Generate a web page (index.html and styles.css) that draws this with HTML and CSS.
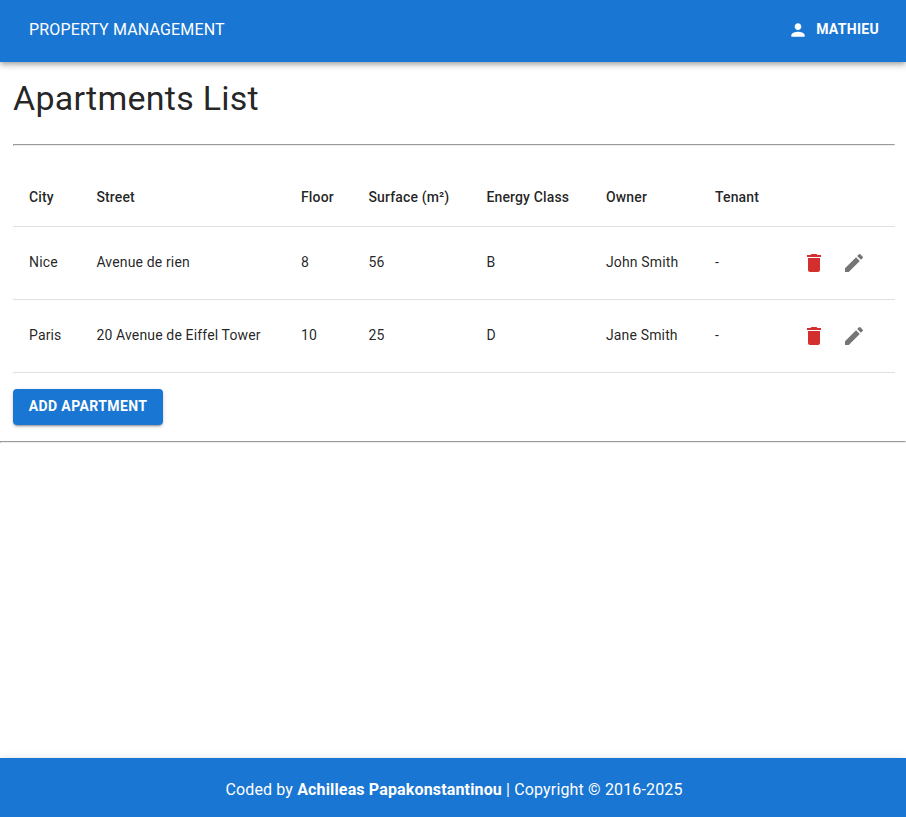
FILE: index.html
```html
<!DOCTYPE html>
<html lang="en">
<head>
<meta charset="utf-8">
<title>Property Management</title>
<link rel="stylesheet" href="styles.css">
</head>
<body>
<header class="appbar">
  <div class="brand">PROPERTY MANAGEMENT</div>
  <button class="user"><svg viewBox="0 0 24 24"><path d="M12 12c2.21 0 4-1.79 4-4s-1.79-4-4-4-4 1.79-4 4 1.79 4 4 4m0 2c-2.67 0-8 1.34-8 4v2h16v-2c0-2.66-5.33-4-8-4"/></svg><span>MATHIEU</span></button>
</header>
<main class="content">
  <h1>Apartments List</h1>
  <hr class="rule">
  <table>
    <colgroup><col class="c1"><col class="c2"><col class="c3"><col class="c4"><col class="c5"><col class="c6"><col class="c7"><col></colgroup>
    <thead><tr><th>City</th><th>Street</th><th>Floor</th><th>Surface (m²)</th><th>Energy Class</th><th>Owner</th><th>Tenant</th><th></th></tr></thead>
    <tbody>
      <tr><td>Nice</td><td>Avenue de rien</td><td>8</td><td>56</td><td>B</td><td>John Smith</td><td>-</td><td class="tools"><div class="actions"><svg class="delete" viewBox="0 0 24 24"><path d="M6 19c0 1.100.9 2 2 2h8c1.100 0 2-.9 2-2V7H6zM19 4h-3.500l-1-1h-5l-1 1H5v2h14z"/></svg><svg class="edit" viewBox="0 0 24 24"><path d="M3 17.250V21h3.750L17.810 9.940l-3.750-3.750zM20.710 7.040c.39-.39.39-1.020 0-1.410l-2.340-2.340a.996.996 0 0 0-1.410 0l-1.830 1.830 3.750 3.750z"/></svg></div></td></tr>
      <tr><td>Paris</td><td>20 Avenue de Eiffel Tower</td><td>10</td><td>25</td><td>D</td><td>Jane Smith</td><td>-</td><td class="tools"><div class="actions"><svg class="delete" viewBox="0 0 24 24"><path d="M6 19c0 1.100.9 2 2 2h8c1.100 0 2-.9 2-2V7H6zM19 4h-3.500l-1-1h-5l-1 1H5v2h14z"/></svg><svg class="edit" viewBox="0 0 24 24"><path d="M3 17.250V21h3.750L17.810 9.940l-3.750-3.750zM20.710 7.040c.39-.39.39-1.020 0-1.410l-2.340-2.340a.996.996 0 0 0-1.410 0l-1.830 1.830 3.750 3.750z"/></svg></div></td></tr>
    </tbody>
  </table>
  <button class="add">ADD APARTMENT</button>
</main>
<hr class="divider">
<footer class="footer"><p>Coded by <strong>Achilleas Papakonstantinou</strong> | Copyright © 2016-2025</p></footer>
</body>
</html>
```
FILE: styles.css
```css
* { box-sizing: border-box; }
body {
  margin: 0;
  min-height: 817px;
  display: flex;
  flex-direction: column;
  font-family: Roboto, sans-serif;
  color: rgba(0, 0, 0, 0.87);
  background: #fff;
}
button { border: 0; font-family: inherit; color: #fff; }
.appbar {
  height: 62px;
  padding: 0 19px 4px 29px;
  display: flex;
  align-items: center;
  justify-content: space-between;
  color: #fff;
  background: #1976d2;
  box-shadow: 0 2px 4px -1px rgba(0,0,0,.2), 0 4px 5px rgba(0,0,0,.14), 0 1px 10px rgba(0,0,0,.12);
}
.brand { padding-top: 2px; font-size: 16px; line-height: 24px; letter-spacing: 0.15px; }
.user {
  display: flex;
  align-items: center;
  gap: 8px;
  padding: 6px 8px;
  background: none;
  font-size: 14px;
  font-weight: 700;
  line-height: 24px;
  letter-spacing: 0.3px;
}
.user svg { width: 20px; height: 20px; margin-top: 2px; fill: currentColor; }
.content { padding: 15px 11px 16px 13px; }
h1 {
  margin: 0 0 25px;
  font-size: 34px;
  font-weight: 400;
  line-height: 42px;
  letter-spacing: 0.25px;
}
hr { width: 100%; margin: 0; border: 1px solid; border-color: #9a9a9a #eee #eee #9a9a9a; }
.rule { margin-bottom: 22px; }
table {
  width: 100%;
  border-collapse: collapse;
  table-layout: fixed;
  font-size: 14px;
  letter-spacing: 0.15px;
}
th, td { padding: 0 16px; text-align: left; white-space: nowrap; border-bottom: 1px solid #e0e0e0; }
th { height: 58px; padding-top: 1px; font-weight: 500; line-height: 24px; }
td { height: 73px; padding-bottom: 2px; line-height: 20px; }
.c1 { width: 67.4px; }
.c2 { width: 204.6px; }
.c3 { width: 67.4px; }
.c4 { width: 118px; }
.c5 { width: 119.6px; }
.c6 { width: 109px; }
.c7 { width: 74px; }
.tools { padding: 0 16px 0 29px; }
.actions { display: flex; gap: 16px; }
.actions svg { width: 24px; height: 24px; }
.delete { fill: #d32f2f; }
.edit { fill: #757575; }
.add {
  display: block;
  width: 150px;
  height: 36px;
  margin-top: 16px;
  padding: 0 0 2px;
  border-radius: 4px;
  background: #1976d2;
  font-size: 14px;
  font-weight: 700;
  letter-spacing: 0.4px;
  box-shadow: 0 3px 1px -2px rgba(0,0,0,.2), 0 2px 2px rgba(0,0,0,.14), 0 1px 5px rgba(0,0,0,.12);
}
.footer {
  height: 59px;
  margin-top: auto;
  display: flex;
  align-items: center;
  justify-content: center;
  color: #fff;
  background: #1976d2;
  box-shadow: 0 2px 4px -1px rgba(0,0,0,.2), 0 4px 5px rgba(0,0,0,.14), 0 1px 10px rgba(0,0,0,.12);
}
.footer p { margin: 4px 0 0 2px; font-size: 16px; line-height: 24px; letter-spacing: 0.15px; }
```
